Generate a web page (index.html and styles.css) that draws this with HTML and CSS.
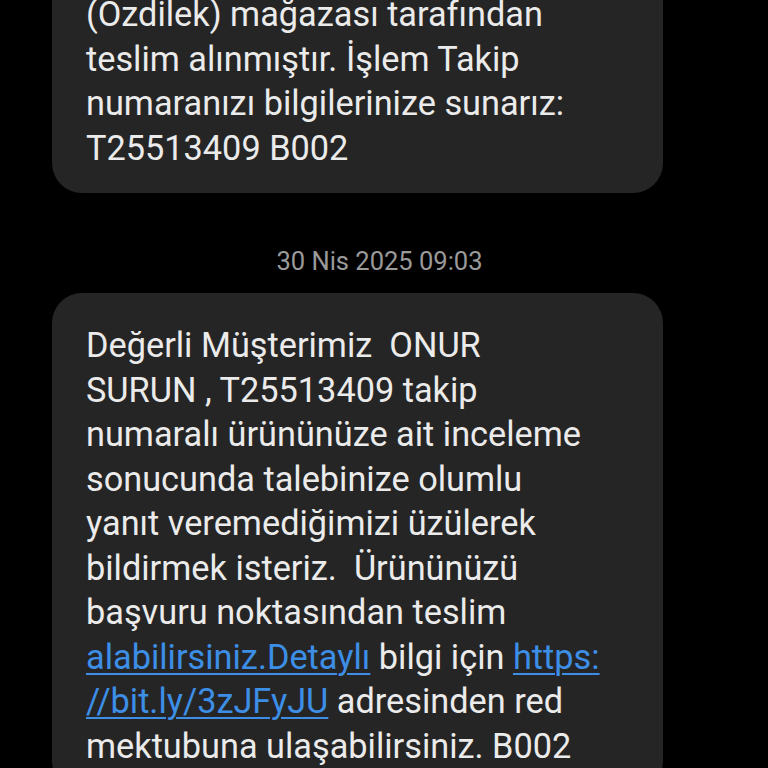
FILE: index.html
```html
<!DOCTYPE html>
<html lang="tr">
<head>
<meta charset="utf-8">
<link rel="stylesheet" href="styles.css">
</head>
<body>
<div class="thread">
  <div class="bubble bubble-first">
    <p class="msg">(Özdilek) mağazası tarafından<br>teslim alınmıştır. İşlem Takip<br>numaranızı bilgilerinize sunarız:<br>T25513409 B002</p>
  </div>
  <div class="stamp">30 Nis 2025 09:03</div>
  <div class="bubble">
    <p class="msg">Değerli Müşterimiz&nbsp; ONUR<br>SURUN , T25513409 takip<br>numaralı ürününüze ait inceleme<br>sonucunda talebinize olumlu<br>yanıt veremediğimizi üzülerek<br>bildirmek isteriz.&nbsp; Ürününüzü<br>başvuru noktasından teslim<br><a class="link" href="#">alabilirsiniz.Detaylı</a> bilgi için <a class="link" href="#">https:<br>//bit.ly/3zJFyJU</a> adresinden red<br>mektubuna ulaşabilirsiniz. B002</p>
  </div>
</div>
</body>
</html>
```
FILE: styles.css
```css
html, body {
  margin: 0;
  padding: 0;
  background: #000;
  height: 100%;
  overflow: hidden;
}
.thread {
  display: flex;
  flex-direction: column;
  padding: 0 105px 0 52px;
  font-family: Roboto, "Noto Sans", sans-serif;
}
.bubble {
  background: #252525;
  border-radius: 30px;
  padding: 30px 30px 23px 34px;
}
.bubble-first {
  margin-top: -38px;
}
.msg {
  margin: 0;
  color: #ebebeb;
  font-size: 34.3px;
  line-height: 44.5px;
  white-space: nowrap;
}
.link {
  color: #3d8ee6;
  text-decoration: underline;
  text-decoration-thickness: 2px;
  text-underline-offset: 4px;
}
.stamp {
  box-sizing: border-box;
  height: 100px;
  padding-top: 36px;
  display: flex;
  align-items: center;
  justify-content: center;
  color: #9a9a9a;
  font-size: 25.5px;
  margin-left: -52px;
  margin-right: -96px;
}
```
